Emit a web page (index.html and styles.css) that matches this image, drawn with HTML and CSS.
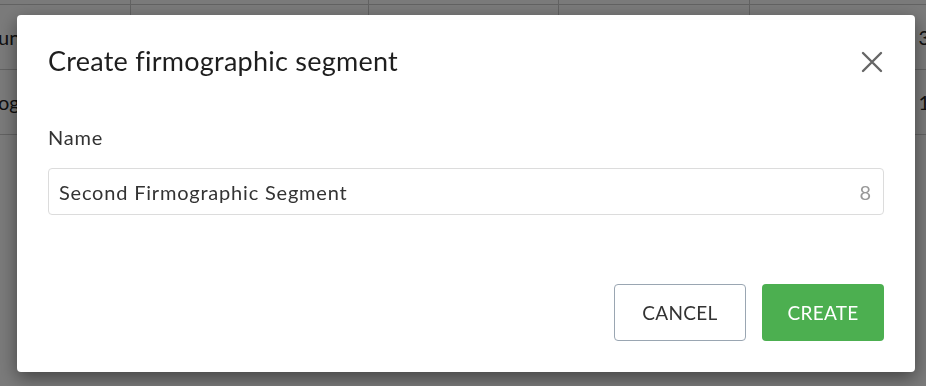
FILE: index.html
```html
<!DOCTYPE html>
<html lang="en">
<head>
    <meta charset="UTF-8">
    <meta name="viewport" content="width=device-width, initial-scale=1.0">
    <title>Create firmographic segment</title>
    <link rel="stylesheet" href="styles.css">
</head>
<body>
    <!-- table behind the dialog -->
    <div class="table">
        <div class="row head">
            <div class="cell c1"></div>
            <div class="cell c2"></div>
            <div class="cell c3"></div>
            <div class="cell c4"></div>
            <div class="cell c5"></div>
        </div>
        <div class="row">
            <div class="cell c1"><span class="tail">un</span></div>
            <div class="cell c2"></div>
            <div class="cell c3"></div>
            <div class="cell c4"></div>
            <div class="cell c5"><span class="num">3</span></div>
        </div>
        <div class="row">
            <div class="cell c1"><span class="tail">og</span></div>
            <div class="cell c2"></div>
            <div class="cell c3"></div>
            <div class="cell c4"></div>
            <div class="cell c5"><span class="num">1</span></div>
        </div>
        <div class="row"></div>
    </div>

    <div class="overlay">
        <div class="modal">
            <div class="modal-header">
                <h2>Create firmographic segment</h2>
                <button class="close" aria-label="Close">
                    <svg width="22" height="22" viewBox="0 0 22 22">
                        <path d="M2 2 L20 20 M20 2 L2 20" stroke="#666" stroke-width="2.4" stroke-linecap="round" fill="none"/>
                    </svg>
                </button>
            </div>

            <label class="field-label" for="name">Name</label>
            <div class="field">
                <input id="name" type="text" value="Second Firmographic Segment">
                <span class="counter">8</span>
            </div>

            <div class="actions">
                <button class="btn btn-cancel">CANCEL</button>
                <button class="btn btn-create">CREATE</button>
            </div>
        </div>
    </div>
</body>
</html>
```

FILE: styles.css
```css
html, body {
    margin: 0;
    padding: 0;
    height: 100%;
    overflow: hidden;
}
body {
    font-family: Lato, "Noto Sans", sans-serif;
    background: #fff;
    color: #222;
}

/* background table */
.table {
    padding-top: 4px;
}
.row {
    display: flex;
    height: 64px;
    border-top: 1px solid #ccc;
}
.row.head {
    height: 0;
    border-top: none;
}
.row.head .cell {
    height: 4px;
    margin-top: -4px;
}
.cell {
    border-right: 1px solid #ccc;
    display: flex;
    align-items: center;
    font-size: 20px;
    color: #222;
}
.c1 { width: 130px; }
.c2 { width: 237px; }
.c3 { width: 189px; }
.c4 { width: 190px; }
.c5 { flex: 1; border-right: none; justify-content: flex-end; }
.tail { margin-left: -2px; }
.num { margin-right: -4px; }

/* dialog */
.overlay {
    position: fixed;
    inset: 0;
    background: rgba(0, 0, 0, 0.52);
    padding: 15px 0 0 17px;
}
.modal {
    width: 898px;
    height: 357px;
    box-sizing: border-box;
    background: #fff;
    border-radius: 4px;
    box-shadow: 0 6px 18px rgba(0, 0, 0, 0.45);
    padding: 26px 31px 31px 31px;
    display: flex;
    flex-direction: column;
}
.modal-header {
    display: flex;
    justify-content: space-between;
    align-items: center;
    height: 38px;
}
.modal-header h2 {
    margin: 0;
    font-size: 27px;
    letter-spacing: 0.25px;
    font-weight: 400;
    color: #1e1e1e;
}
.close {
    background: none;
    border: none;
    padding: 0;
    margin-right: 1px;
    margin-top: 4px;
    width: 22px;
    height: 22px;
    cursor: pointer;
}
.field-label {
    margin-top: 46px;
    font-size: 20px;
    letter-spacing: 0.8px;
    color: #333;
}
.field {
    margin-top: 19px;
    height: 47px;
    box-sizing: border-box;
    border: 1px solid #dcdcdc;
    border-radius: 4px;
    display: flex;
    align-items: center;
    padding: 0 12px 0 10px;
}
.field input {
    flex: 1;
    border: none;
    outline: none;
    padding: 0;
    font-family: inherit;
    font-size: 20px;
    letter-spacing: 0.8px;
    color: #333;
    background: transparent;
}
.counter {
    font-size: 20px;
    color: #999;
}
.actions {
    margin-top: auto;
    display: flex;
    justify-content: flex-end;
    gap: 16px;
}
.btn {
    font-family: inherit;
    font-size: 19px;
    letter-spacing: 0.3px;
    border-radius: 4px;
    height: 57px;
    cursor: pointer;
}
.btn-cancel {
    width: 132px;
    background: #fff;
    color: #333;
    border: 1px solid #9aa6b2;
}
.btn-create {
    width: 122px;
    background: #4caf50;
    color: #fff;
    border: none;
}
.btn-create:hover {
    background: #43a047;
}
```
